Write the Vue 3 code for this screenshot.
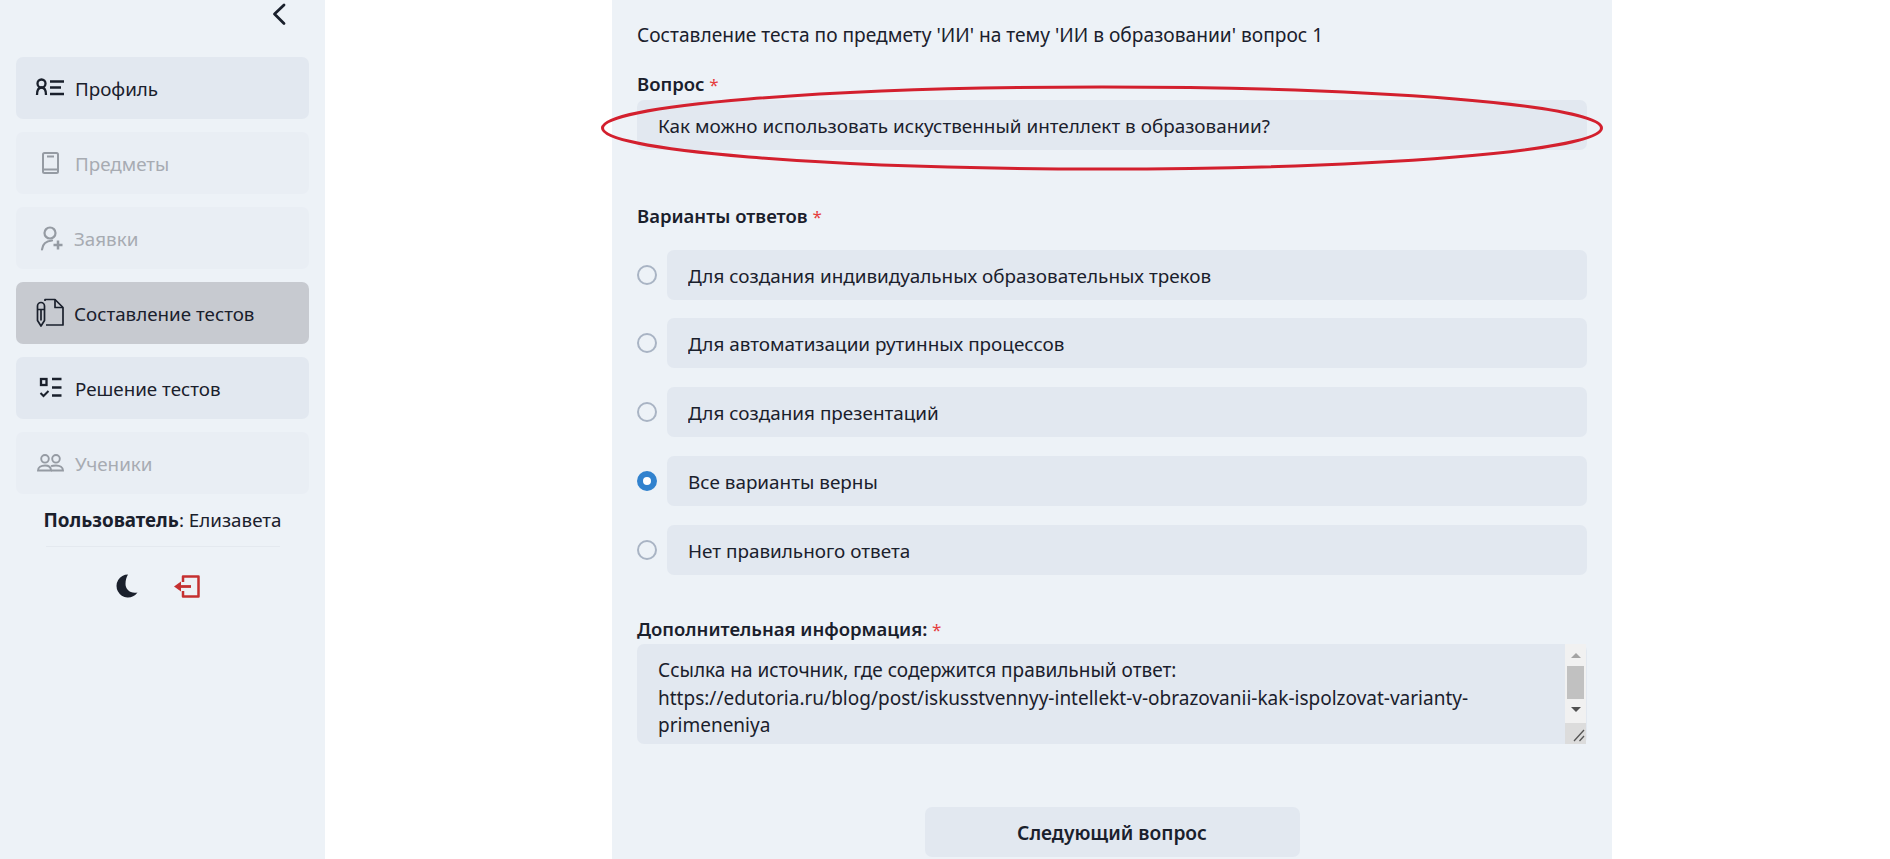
<template>
  <div class="page">
    <aside class="sidebar">
      <div class="collapse-row">
        <svg class="chevron" width="16" height="24" viewBox="0 0 16 24" fill="none">
          <path d="M13 3 3.5 12 13 21.500" stroke="#1a202c" stroke-width="2.800" stroke-linecap="round" stroke-linejoin="round" />
        </svg>
      </div>

      <nav class="menu">
        <div
          v-for="item in menu"
          :key="item.label"
          class="menu-item"
          :class="{ disabled: item.disabled, active: item.active }"
        >
          <span class="menu-icon" :style="{ width: item.iconWidth + 'px' }">
            <svg v-if="item.icon === 'profile'" width="30" height="20" viewBox="0 0 30 20" fill="none" stroke="#1a202c" stroke-width="2.300">
              <circle cx="6.500" cy="5.500" r="4" />
              <path d="M2 17c0-5 1-7.500 4.500-7.500S11 12 11 17" />
              <path d="M15 3.500h14M15 9.500h11M15 16h14" />
            </svg>
            <svg v-else-if="item.icon === 'book'" width="26" height="24" viewBox="0 0 26 24" fill="none" stroke="#1a202c" stroke-width="2">
              <rect x="8" y="2" width="15" height="20" rx="1.500" />
              <path d="M8 18.500h15" />
              <path d="M12 5.500h7" />
            </svg>
            <svg v-else-if="item.icon === 'request'" width="28" height="25" viewBox="0 0 28 25" fill="none" stroke="#1a202c" stroke-width="2.200">
              <circle cx="15" cy="7" r="5.500" />
              <path d="M7 23.500c.5-5 4-8.500 10-9" stroke-linecap="round" />
              <path d="M23 14.500v9M18.500 19h9" stroke-width="2.500" />
            </svg>
            <svg v-else-if="item.icon === 'compose'" width="29" height="30" viewBox="0 0 29 30" fill="none" stroke="#1a202c" stroke-width="1.700" stroke-linejoin="round">
              <path d="M10 3V1.500h10L28 9.500V27H11" />
              <path d="M20 1.500v8h8" />
              <path d="M2.500 8a3.500 3.500 0 0 1 7 0v14.500L6 28l-3.500-5.500z" />
              <path d="M2.500 11.500h7M6 11.500v11" />
            </svg>
            <svg v-else-if="item.icon === 'solve'" width="27" height="22" viewBox="0 0 27 22" fill="none" stroke="#1a202c" stroke-width="2.300">
              <rect x="6" y="2" width="5.500" height="6" />
              <path d="M17 2h9.500M17 10.500h9.500M17 18.500h9.500" />
              <path d="M5.500 16l3 3 5-5" stroke-width="2" />
            </svg>
            <svg v-else-if="item.icon === 'students'" width="29" height="19" viewBox="0 0 29 19" fill="none" stroke="#1a202c" stroke-width="1.900">
              <circle cx="10" cy="4.800" r="3.800" />
              <circle cx="21" cy="4.800" r="3.800" />
              <path d="M3 16.500c0-3 3-5 7-5s6 2 6 5z" />
              <path d="M16 12.200c1.300-.5 3-.7 5-.7 4 0 7 2 7 5H16" />
            </svg>
          </span>
          <span class="menu-label">{{ item.label }}</span>
        </div>
      </nav>

      <p class="user-line"><b>Пользователь</b>: Елизавета</p>
      <hr class="divider" />

      <div class="side-actions">
        <svg width="22" height="24" viewBox="0 0 22 24">
          <path d="M12 .5A11.500 11.500 0 1 0 21.500 18.500C14 20 9.500 15 9.500 10 9.500 6 10.500 3 12 .5z" fill="#1a202c" />
        </svg>
        <svg width="27" height="24" viewBox="0 0 27 24" fill="none" stroke="#c53030" stroke-width="2.500" stroke-linejoin="round">
          <path d="M10 8V2.500h15.500v20H10V17" />
          <path d="M6 12.500h12" stroke-width="2.800" />
          <path d="M8 7.500 1 12.500 8 17.500z" fill="#c53030" stroke="none" />
        </svg>
      </div>
    </aside>

    <main class="content">
      <section class="panel">
        <p class="title">Составление теста по предмету 'ИИ' на тему 'ИИ в образовании' вопрос 1</p>

        <label class="field-label">Вопрос <span class="req">*</span></label>
        <input class="text-input" type="text" readonly :value="question" />

        <label class="field-label answers-label">Варианты ответов <span class="req">*</span></label>
        <div class="options">
          <div v-for="(opt, i) in options" :key="opt" class="option">
            <span class="radio" :class="{ checked: i === correct }"></span>
            <input class="text-input option-input" type="text" readonly :value="opt" />
          </div>
        </div>

        <label class="field-label info-label">Дополнительная информация: <span class="req">*</span></label>
        <div class="textarea-wrap">
          <textarea class="text-area" readonly :value="info"></textarea>
          <div class="scrollbar">
            <span class="arrow up"></span>
            <span class="thumb"></span>
            <span class="arrow down"></span>
            <span class="resizer">
              <svg width="21" height="21" viewBox="0 0 21 21" fill="none" stroke="#555" stroke-width="1.300">
                <path d="M9 18 19 7M14.500 18 19 13" />
              </svg>
            </span>
          </div>
        </div>

        <button class="next-btn" type="button">Следующий вопрос</button>
      </section>

      <!-- красная пометка поверх поля вопроса -->
      <svg class="mark" width="1010" height="95" viewBox="0 0 1010 95" fill="none">
        <ellipse cx="505" cy="47" rx="499.500" ry="41" stroke="#d3202e" stroke-width="3" />
      </svg>
    </main>
  </div>
</template>

<script setup>
const menu = [
  { label: 'Профиль', icon: 'profile', iconWidth: 40 },
  { label: 'Предметы', icon: 'book', iconWidth: 40, disabled: true },
  { label: 'Заявки', icon: 'request', iconWidth: 39, disabled: true },
  { label: 'Составление тестов', icon: 'compose', iconWidth: 39, active: true },
  { label: 'Решение тестов', icon: 'solve', iconWidth: 40 },
  { label: 'Ученики', icon: 'students', iconWidth: 40, disabled: true }
]

const question = 'Как можно использовать искуственный интеллект в образовании?'

const options = [
  'Для создания индивидуальных образовательных треков',
  'Для автоматизации рутинных процессов',
  'Для создания презентаций',
  'Все варианты верны',
  'Нет правильного ответа'
]
const correct = 3

const info =
  'Ссылка на источник, где содержится правильный ответ:\nhttps://edutoria.ru/blog/post/iskusstvennyy-intellekt-v-obrazovanii-kak-ispolzovat-varianty-primeneniya'
</script>

<style>
html,
body {
  margin: 0;
  background: #fff;
  overflow: hidden;
}
</style>

<style scoped>
.page {
  display: flex;
  height: 859px;
  overflow: hidden;
  font-family: "Noto Sans", "Open Sans", sans-serif;
  font-size: 19.150px;
  line-height: 27px;
  color: #1a202c;
}

.sidebar {
  width: 325px;
  flex: none;
  box-sizing: border-box;
  padding: 0 16px;
  background: #edf2f7;
  font-size: 18.800px;
}

.collapse-row {
  display: flex;
  justify-content: flex-end;
  height: 57px;
  padding: 2px 22px 0 0;
  box-sizing: border-box;
}

.menu {
  display: flex;
  flex-direction: column;
  gap: 13px;
}

.menu-item {
  display: flex;
  align-items: center;
  height: 62px;
  padding-left: 19px;
  border-radius: 7px;
  background: #e2e8f0;
}

.menu-item.disabled {
  background: #e9eef4;
  color: #a7abb2;
}

.menu-item.disabled svg {
  opacity: 0.4;
}

.menu-item.active {
  background: #c7cad0;
}

.menu-icon {
  display: flex;
  flex: none;
  align-items: center;
}

.menu-label {
  padding-top: 2px;
}

.user-line {
  margin: 13px 0 0;
  text-align: center;
}

.divider {
  width: 234px;
  margin: 12px auto 0;
  border: 0;
  border-top: 1px solid #e4e9ef;
}

.side-actions {
  display: flex;
  justify-content: center;
  align-items: center;
  gap: 35px;
  margin-top: 27px;
  padding-right: 9px;
}

.content {
  position: relative;
  flex: 1;
  min-width: 0;
}

.panel {
  width: 1000px;
  min-height: 859px;
  box-sizing: border-box;
  margin-left: 287px;
  padding: 22px 25px 0;
  background: #edf2f7;
}

.title {
  margin: 0 0 21px;
}

.field-label {
  display: block;
  height: 27px;
  margin-bottom: 3px;
  font-size: 18.500px;
  font-weight: 600;
}

.req {
  font-size: 17px;
  line-height: 1;
  font-weight: 400;
  color: #e53e3e;
}

.text-input {
  display: block;
  width: 100%;
  height: 50px;
  box-sizing: border-box;
  padding: 2px 21px 0;
  border: 0;
  border-radius: 7px;
  outline: 0;
  background: #e2e8f0;
  font: inherit;
  font-size: 18.900px;
  color: #1a202c;
}

.answers-label {
  margin-top: 52px;
  margin-bottom: 20.500px;
}

.options {
  display: flex;
  flex-direction: column;
  gap: 18.750px;
}

.option {
  display: flex;
  align-items: center;
  gap: 10px;
}

.radio {
  flex: none;
  width: 20px;
  height: 20px;
  box-sizing: border-box;
  border: 2px solid #a9b4c4;
  border-radius: 50%;
}

.radio.checked {
  border: 6px solid #3182ce;
  background: #fff;
}

.option-input {
  flex: 1;
  min-width: 0;
}

.info-label {
  margin-top: 40.500px;
  margin-bottom: 2px;
}

.textarea-wrap {
  position: relative;
  height: 100px;
}

.text-area {
  display: block;
  width: 100%;
  height: 100px;
  box-sizing: border-box;
  padding: 13px 42px 0 21px;
  border: 0;
  border-radius: 7px;
  outline: 0;
  resize: none;
  overflow: hidden;
  background: #e2e8f0;
  font: inherit;
  font-size: 19px;
  line-height: 27.500px;
  color: #1a202c;
}

.scrollbar {
  position: absolute;
  top: 0;
  right: 1px;
  bottom: 0;
  display: flex;
  flex-direction: column;
  align-items: center;
  width: 21px;
  background: #f1f1f1;
}

.arrow {
  flex: none;
  width: 0;
  height: 0;
  border-left: 5px solid transparent;
  border-right: 5px solid transparent;
}

.arrow.up {
  margin-top: 9px;
  border-bottom: 5px solid #a3a3a3;
}

.arrow.down {
  margin-top: 8px;
  border-top: 5px solid #505050;
}

.thumb {
  flex: none;
  width: 17px;
  height: 33px;
  margin-top: 8px;
  background: #c1c1c1;
}

.resizer {
  display: block;
  width: 21px;
  height: 21px;
  margin-top: auto;
  background: #dcdcdc;
}

.next-btn {
  display: block;
  width: 375px;
  height: 50px;
  margin: 63px auto 0;
  border: 0;
  border-radius: 7px;
  background: #e2e8f0;
  font: inherit;
  font-size: 19.200px;
  font-weight: 600;
  color: #1a202c;
}

.mark {
  position: absolute;
  top: 81px;
  left: 272px;
  pointer-events: none;
}
</style>
